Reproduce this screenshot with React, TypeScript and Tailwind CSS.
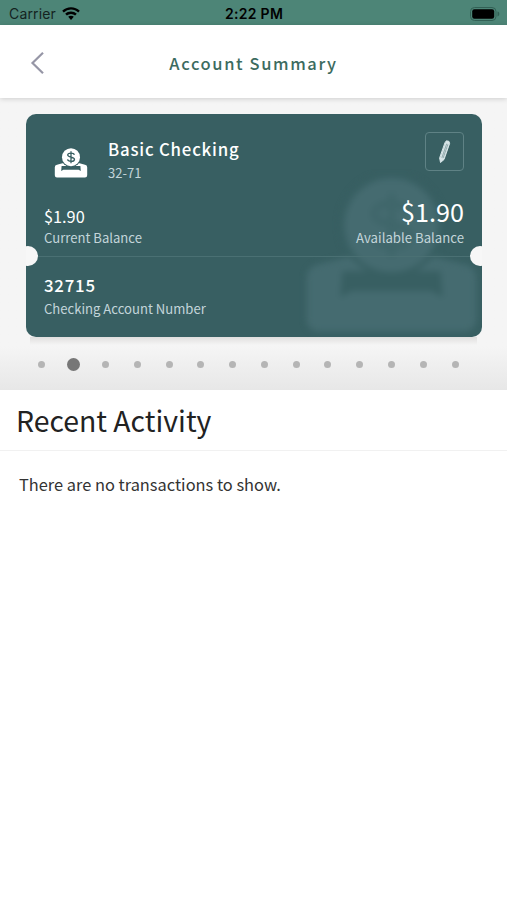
const DOT_COUNT = 14;
const ACTIVE_DOT = 1;

const account = {
  name: "Basic Checking",
  mask: "32-71",
  currentBalance: "$1.90",
  availableBalance: "$1.90",
  number: "32715",
};

function WifiIcon() {
  return (
    <svg className="h-[14px] w-[18px]" viewBox="0 0 18 14">
      <path d="M9 .2C5.6.2 2.5 1.5.2 3.7l1.6 1.7A10.4 10.4 0 0 1 9 2.6c2.8 0 5.3 1.1 7.2 2.8l1.6-1.7C15.5 1.5 12.4.2 9 .2z" />
      <path d="M9 4.4c-2.2 0-4.3.9-5.8 2.3l1.7 1.8A6 6 0 0 1 9 6.9a6 6 0 0 1 4.1 1.6l1.7-1.8A8.4 8.4 0 0 0 9 4.4z" />
      <path d="M9 8.7c-1.1 0-2.1.4-2.8 1.1L9 13l2.8-3.2C11.1 9.1 10.1 8.7 9 8.7z" />
    </svg>
  );
}

function BatteryIcon() {
  return (
    <svg className="h-[14px] w-[30px]" viewBox="0 0 30 14" fill="none">
      <rect x=".5" y=".5" width="25.5" height="13" rx="4" stroke="#326055" />
      <rect x="2.2" y="2.2" width="22" height="9.6" rx="2.2" fill="#000" />
      <path d="M27.5 4.6c1.2.3 1.8 1.2 1.8 2.4s-.6 2.1-1.8 2.4z" fill="#326055" />
    </svg>
  );
}

function DepositIcon({ className, ink, symbol }: { className: string; ink: string; symbol: string }) {
  return (
    <svg className={className} viewBox="0 0 34 30" fill="currentColor">
      <path d="M8.5 15.3h17l5.500 1.400a2.600 2.600 0 0 1 2.200 2.600v8a2.200 2.200 0 0 1-2.200 2.200H3a2.200 2.200 0 0 1-2.200-2.200v-8A2.600 2.600 0 0 1 3 16.700z" />
      <path d="M7.600 18h18.800l.4 5-2.200-1.200H9.400L7.200 23z" fill={ink} />
      <circle cx="17" cy="9.2" r="9.900" fill={ink} />
      <circle cx="17" cy="9.2" r="9" />
      <path
        d="M20.400 6.800c-.6-2.100-6.600-2.500-6.700.2 0 2.700 6.900 1.500 6.800 4.400-.2 2.800-6.500 2.400-7 0M17 3.200v12"
        fill="none"
        stroke={symbol}
        strokeWidth="1.3"
      />
    </svg>
  );
}

function PencilIcon() {
  return (
    <svg className="h-[26px] w-[14px]" viewBox="0 0 14 26" fill="none" strokeLinejoin="round" strokeLinecap="round">
      <path d="M7.200 3.400 8.400 1.800 11 2.400 11.600 4.500 6 20.500 2.500 23.500 1.700 19.300z" fill="#d7e5e8" stroke="#d7e5e8" />
      <path d="M8.600 5 4 18.400M9.800 5.600 5.200 18.800" stroke="#7f9a9d" strokeWidth=".8" />
    </svg>
  );
}

export default function App() {
  return (
    <div className="flex h-[900px] w-[507px] flex-col overflow-hidden bg-white font-['Noto_Sans_CJK_SC','Noto_Sans',sans-serif]">
      {/* Status bar */}
      <div className="grid h-[25px] shrink-0 grid-cols-3 items-center bg-[#4d8577] pt-[2px] pr-[7px] pl-[9px] font-['Inter','Liberation_Sans',sans-serif] text-sm text-black">
        <div className="flex items-center gap-[6px]">
          <span className="tracking-[0.15px] text-[#14231f]">Carrier</span>
          <WifiIcon />
        </div>
        <span className="pr-px text-center font-semibold tracking-[0.3px] whitespace-nowrap">2:22 PM</span>
        <div className="flex justify-end">
          <BatteryIcon />
        </div>
      </div>

      {/* Header */}
      <header className="z-10 grid h-[73px] shrink-0 grid-cols-[80px_1fr_80px] items-center bg-white pt-[3px] shadow-[0_1px_5px_rgba(0,0,0,0.16)]">
        <button className="pl-[30px]">
          <svg className="h-[24px] w-[15px]" viewBox="0 0 15 24" fill="none" stroke="#9696a6" strokeWidth="2.2">
            <path d="M13 1.800 2.500 12 13 22.200" />
          </svg>
        </button>
        <h1 className="text-center text-[16.5px] font-medium tracking-[1.6px] text-[#3c6b60]">Account Summary</h1>
      </header>

      {/* Account card */}
      <section className="flex h-[292px] shrink-0 flex-col bg-linear-to-b from-[#f5f5f5] from-85% to-[#e7e7e7] px-[26px] pt-4">
        <div className="relative flex h-[223px] w-[456px] shrink-0 flex-col overflow-hidden rounded-[10px] bg-[#385f62] text-white">
          <DepositIcon
            className="absolute top-[63px] left-[275px] h-[157px] w-[181px] text-[#456b70] blur-[3px]"
            ink="#385f62"
            symbol="#3f666a"
          />

          <div className="relative flex h-[143px] flex-col border-b border-[#4a7073] px-[18px]">
            <div className="flex h-[85px] pt-[18px]">
              <DepositIcon className="mt-[16px] ml-[10px] h-[30px] w-[34px]" ink="#385f62" symbol="#385f62" />
              <div className="ml-5 flex-1">
                <h2 className="mt-[5px] text-[16.8px] leading-6 font-medium tracking-[0.8px]">{account.name}</h2>
                <p className="pt-px text-[13px] leading-[22px] text-[#c3d5da]">{account.mask}</p>
              </div>
              <button className="flex size-[39px] items-center justify-center rounded-[4px] border border-[#5f8285]">
                <PencilIcon />
              </button>
            </div>
            <div className="flex h-[50px] items-end justify-between">
              <div>
                <p className="text-[16.3px] leading-[21px]">{account.currentBalance}</p>
                <p className="text-[13.1px] leading-[22px] text-[#c3d5da]">Current Balance</p>
              </div>
              <div className="text-right">
                <p className="text-[25.2px] leading-[31px]">{account.availableBalance}</p>
                <p className="text-[13.2px] leading-[22px] text-[#c3d5da]">Available Balance</p>
              </div>
            </div>
          </div>

          <div className="relative px-[18px] pt-4">
            <p className="text-[16.8px] leading-6 font-medium tracking-[0.8px]">{account.number}</p>
            <p className="pt-px text-[13.1px] leading-[22px] text-[#c3d5da]">Checking Account Number</p>
          </div>

          {/* Ticket notches */}
          <span className="absolute top-[132px] -left-[8px] size-5 rounded-full bg-[#f7f7f7]" />
          <span className="absolute top-[132px] -right-[8px] size-5 rounded-full bg-[#f7f7f7]" />
        </div>
        <div className="mx-1 h-2 shrink-0 bg-linear-to-b from-[#e0dfde] to-[#f5f5f5]" />

        <div className="mt-[13px] flex h-3 pr-[10px]">
          {Array.from({ length: DOT_COUNT }, (_, i) => (
            <div key={i} className="flex flex-1 items-center justify-center">
              <span className={i === ACTIVE_DOT ? "size-[13px] rounded-full bg-[#777]" : "size-[7px] rounded-full bg-[#b5b5b5]"} />
            </div>
          ))}
        </div>
      </section>

      {/* Activity */}
      <h2 className="h-[61px] shrink-0 border-b border-[#f1f1f1] pl-4 text-[28.4px] leading-[59px] text-[#222]">Recent Activity</h2>
      <p className="pt-[19px] pl-[19px] text-[16.4px] leading-7 text-[#333]">There are no transactions to show.</p>
    </div>
  );
}
